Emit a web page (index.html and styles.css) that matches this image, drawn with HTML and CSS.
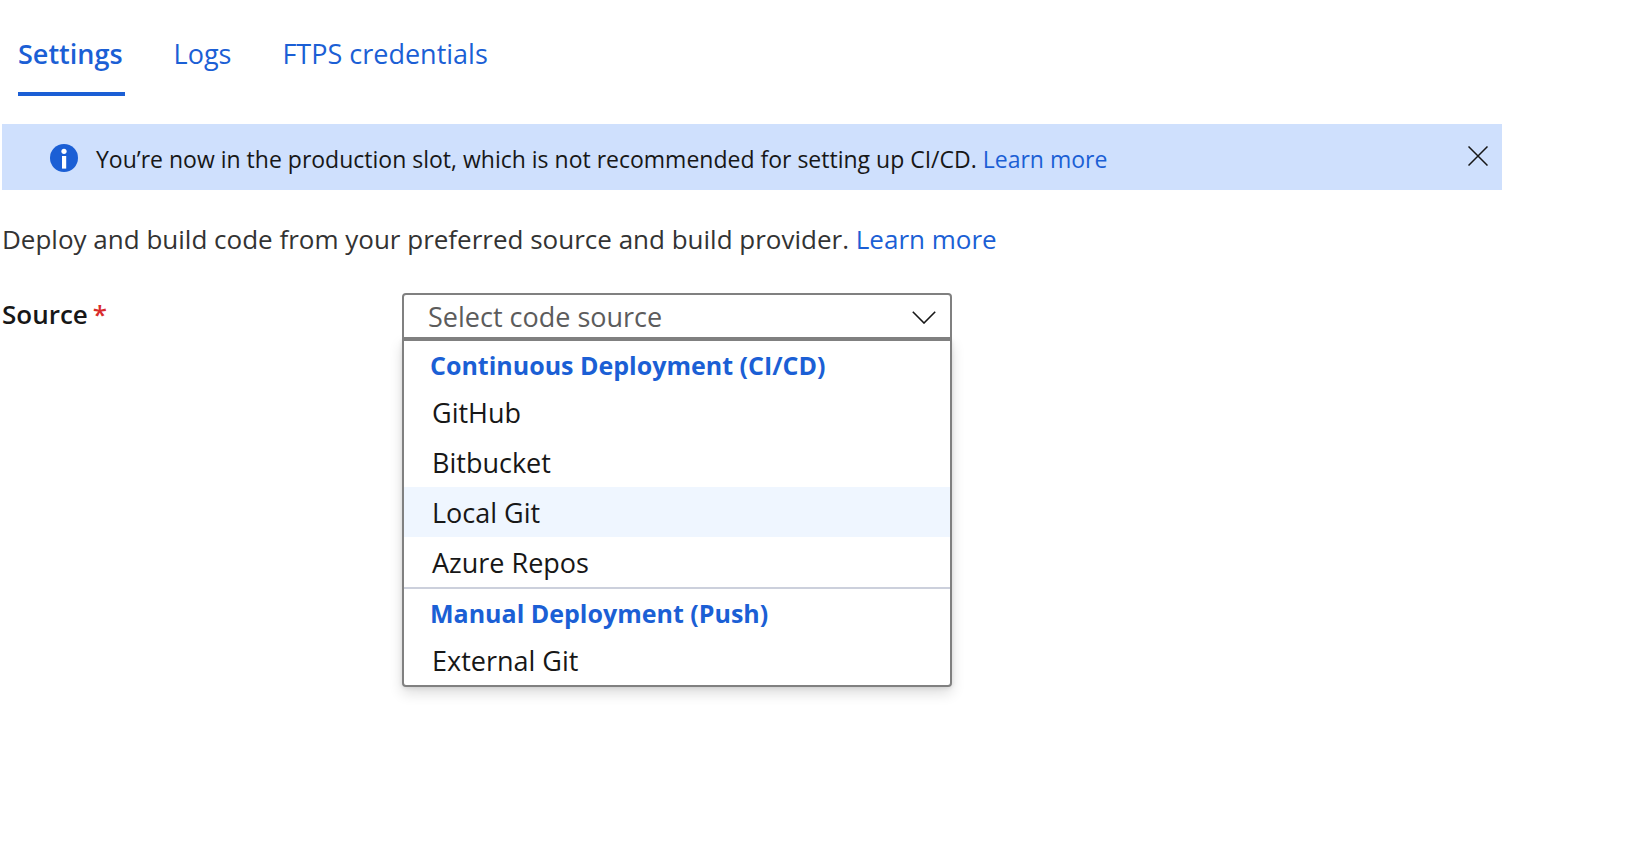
FILE: index.html
```html
<!DOCTYPE html>
<html lang="en">
<head>
<meta charset="utf-8">
<meta name="viewport" content="width=device-width, initial-scale=1">
<title>Deployment Center</title>
<link rel="stylesheet" href="styles.css">
</head>
<body>
<nav class="tabs" role="tablist" aria-label="Deployment Center">
  <button class="tab tab-active" type="button" role="tab" aria-selected="true">Settings</button>
  <button class="tab" type="button" role="tab" aria-selected="false">Logs</button>
  <button class="tab" type="button" role="tab" aria-selected="false">FTPS credentials</button>
</nav>
<main class="content">
  <div class="banner" role="status">
    <svg class="banner-icon" viewBox="0 0 28 28" aria-hidden="true">
      <circle cx="14" cy="14" r="14" fill="#1b5fd5"/>
      <circle cx="14" cy="7.3" r="2.6" fill="#fff"/>
      <rect x="12" y="12" width="4.2" height="12.6" fill="#fff"/>
    </svg>
    <p class="banner-text">You’re now in the production slot, which is not recommended for setting up CI/CD. <a class="link" href="#slots">Learn more</a></p>
    <button class="close" type="button" aria-label="Close">
      <svg class="close-icon" viewBox="0 0 20 20" aria-hidden="true"><path d="M0.5 0.5L19.5 19.5M19.5 0.5L0.5 19.5" fill="none" stroke="#171717" stroke-width="1.5"/></svg>
    </button>
  </div>
  <p class="intro">Deploy and build code from your preferred source and build provider. <a class="link" href="#deploy">Learn more</a></p>
  <div class="field">
    <label class="label" for="source">Source<span class="required">*</span></label>
    <div class="picker">
      <div class="control">
        <select class="select" id="source" required>
          <option value="">Select code source</option>
        </select>
        <svg class="chevron" viewBox="0 0 24 13" aria-hidden="true"><path d="M0.8 0.8L12 12L23.2 0.8" fill="none" stroke="#171717" stroke-width="1.6"/></svg>
      </div>
      <div class="choices">
        <section class="group">
          <h2 class="group-title">Continuous Deployment (CI/CD)</h2>
          <button class="choice" type="button">GitHub</button>
          <button class="choice" type="button">Bitbucket</button>
          <button class="choice choice-hover" type="button">Local Git</button>
          <button class="choice" type="button">Azure Repos</button>
        </section>
        <section class="group">
          <h2 class="group-title">Manual Deployment (Push)</h2>
          <button class="choice" type="button">External Git</button>
        </section>
      </div>
    </div>
  </div>
</main>
</body>
</html>
```
FILE: styles.css
```css
* {
  box-sizing: border-box;
}

body {
  min-height: 100vh;
  margin: 0;
  background: #fff;
  color: #171717;
  font-family: "Segoe UI", "Open Sans", "Noto Sans", sans-serif;
  font-size: 26px;
  line-height: 36px;
}

p {
  margin: 0;
}

button,
select {
  font: inherit;
}

.link {
  color: #1b5fd5;
  text-decoration: none;
}

.tabs {
  display: flex;
  gap: 49px;
  padding: 36px 18px 0;
}

.tab {
  height: 60px;
  padding: 0 2px 20px 0;
  border: 0;
  border-bottom: 4px solid transparent;
  background: none;
  color: #1b5fd5;
  font-size: 27px;
}

.tab-active {
  border-bottom-color: #1b5fd5;
  font-weight: 600;
}

.content {
  padding: 28px 142px 36px 2px;
}

.banner {
  display: flex;
  align-items: flex-start;
  padding: 18px 14px 14px 48px;
  background: #cfe0fd;
  font-size: 23px;
  line-height: 34px;
}

.banner-icon {
  flex: none;
  width: 28px;
  height: 28px;
  margin: 2px 18px 0 0;
}

.banner-text {
  flex: 1;
}

.close {
  display: flex;
  padding: 4px 0;
  border: 0;
  background: none;
}

.close-icon {
  width: 20px;
  height: 20px;
}

.intro {
  padding: 31px 0 36px;
  color: #333;
}

.field {
  display: grid;
  grid-template-columns: 400px minmax(0, 550px);
}

.label {
  padding-top: 3px;
  font-weight: 600;
}

.required {
  margin-left: 5px;
  color: #d92c2c;
}

.control {
  position: relative;
}

.select {
  display: block;
  width: 100%;
  height: 46px;
  padding: 2px 60px 0 24px;
  border: 2px solid #808080;
  border-radius: 4px 4px 0 0;
  appearance: none;
  background: #fff;
  color: #5c5c5c;
  font-size: 27px;
}

.chevron {
  position: absolute;
  top: 18px;
  right: 16px;
  width: 24px;
  height: 13px;
  pointer-events: none;
}

.choices {
  border: 2px solid #808080;
  border-radius: 0 0 4px 4px;
  background: #fff;
  box-shadow: 0 6px 14px rgba(0, 0, 0, 0.14), 0 1px 4px rgba(0, 0, 0, 0.1);
}

.group + .group {
  border-top: 2px solid #ccd0dc;
}

.group-title {
  margin: 0;
  padding: 2px 26px 0;
  color: #1b5fd5;
  font-size: 25px;
  font-weight: 700;
  line-height: 44px;
}

.choice {
  display: block;
  width: 100%;
  padding: 2px 28px 0;
  border: 0;
  background: none;
  color: inherit;
  font-size: 27px;
  line-height: 48px;
  text-align: left;
}

.choice-hover {
  background: #eff6ff;
}
```
